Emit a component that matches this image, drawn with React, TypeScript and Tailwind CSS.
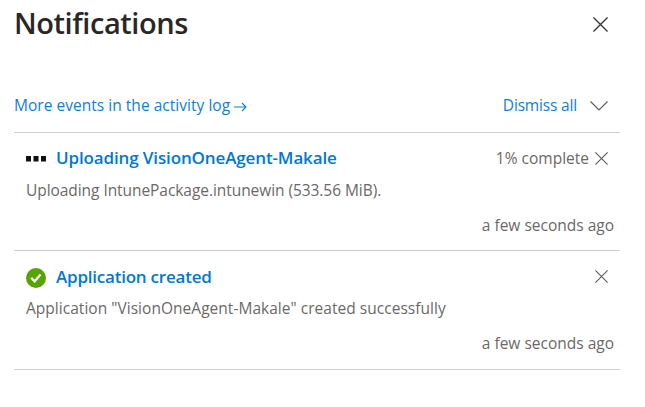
import React from 'react';

// ============================================
// Types
// ============================================
interface NotificationItem {
    id: string;
    status: 'progress' | 'success';
    title: string;
    message: string;
    progress?: string;
    time: string;
}

const notifications: NotificationItem[] = [
    {
        id: 'upload',
        status: 'progress',
        title: 'Uploading VisionOneAgent-Makale',
        message: 'Uploading IntunePackage.intunewin (533.56 MiB).',
        progress: '1% complete',
        time: 'a few seconds ago',
    },
    {
        id: 'created',
        status: 'success',
        title: 'Application created',
        message: 'Application "VisionOneAgent-Makale" created successfully',
        time: 'a few seconds ago',
    },
];

// ============================================
// Icons
// ============================================
const CloseIcon: React.FC<{ className: string }> = ({ className }) => (
    <svg viewBox="0 0 16 16" className={className} fill="none" stroke="currentColor" strokeWidth="1.4">
        <path d="M.5.5l15 15M15.5.5l-15 15" />
    </svg>
);

const ArrowIcon: React.FC = () => (
    <svg viewBox="0 0 13 10" className="mt-[3px] ml-1 h-2.5 w-[13px]" fill="none" stroke="currentColor" strokeWidth="1.1">
        <path d="M0 5h12M8 1l4 4-4 4" />
    </svg>
);

const ChevronIcon: React.FC = () => (
    <svg viewBox="0 0 18 10" className="h-2.5 w-[18px] text-[#605e5c]" fill="none" stroke="currentColor" strokeWidth="1.2">
        <path d="M.5.5L9 9 17.5.5" />
    </svg>
);

const StatusIcon: React.FC<{ status: NotificationItem['status'] }> = ({ status }) =>
    status === 'success' ? (
        <svg viewBox="0 0 20 20" className="mt-[3px] h-5 w-5">
            <circle cx="10" cy="10" r="10" fill="#57a300" />
            <path d="M5.2 9.8l3.4 3.6 6-7" fill="none" stroke="#fff" strokeWidth="2.3" />
        </svg>
    ) : (
        <svg viewBox="0 0 20 20" className="mt-0.5 h-5 w-5" fill="#111">
            <path d="M0 7h5v5.5H0zM7.5 7h5v5.5h-5zM15 7h5v5.5h-5z" />
        </svg>
    );

// ============================================
// Main Component
// ============================================
const App: React.FC = () => (
    <div className="h-[407px] w-[645px] overflow-hidden bg-white pl-3.5 pr-[25px] font-['Open_Sans','Noto_Sans',sans-serif] text-[15.5px] leading-6 text-[#6b6968]">
        <header className="flex h-[46px] items-center justify-between pr-3">
            <h1 className="text-[29px] font-semibold tracking-[-0.43px] text-[#292827]">Notifications</h1>
            <CloseIcon className="mt-[3px] h-[15px] w-[15px] text-[#323130]" />
        </header>
        <div className="mt-[34px] flex h-[53px] items-center justify-between border-b border-[#d2d0ce] pr-3 text-[#0f80d7]">
            <a className="flex items-center pb-0.5 tracking-[0.03px]">
                More events in the activity log
                <ArrowIcon />
            </a>
            <div className="flex items-center gap-[13px]">
                <a className="pb-0.5 tracking-[-0.17px]">Dismiss all</a>
                <ChevronIcon />
            </div>
        </div>
        <div>
            {notifications.map((item) => (
                <article key={item.id} className="group h-[118px] border-b border-[#d2d0ce] pl-3 pr-1.5 last:h-[119px]">
                    <div className="flex h-[45px] items-center pt-[5px]">
                        <StatusIcon status={item.status} />
                        <h2 className="ml-2.5 flex-1 text-[17px] font-semibold tracking-[-0.13px] text-[#0078d4] group-last:pt-0.5 group-last:tracking-[-0.22px]">
                            {item.title}
                        </h2>
                        <span>{item.progress}</span>
                        <CloseIcon className="ml-1.5 mr-[6px] h-[13px] w-[13px] text-[#605e5c]" />
                    </div>
                    <p className="group-first:tracking-[-0.06px] group-last:tracking-[0.03px]">{item.message}</p>
                    <p className="mt-[11px] text-right">{item.time}</p>
                </article>
            ))}
        </div>
    </div>
);

export default App;
